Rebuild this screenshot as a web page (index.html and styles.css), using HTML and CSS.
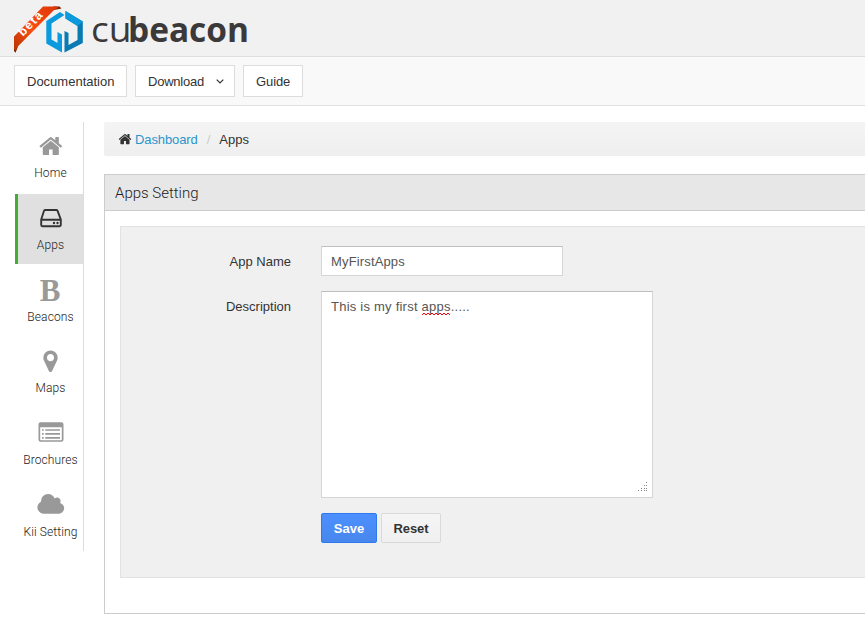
FILE: index.html
```html
<!DOCTYPE html>
<html lang="en">
<head>
<meta charset="utf-8">
<title>Cubeacon</title>
<link rel="stylesheet" href="styles.css">
</head>
<body>
<header class="header">
  <svg class="logo" width="260" height="56" viewBox="0 0 260 56">
    <defs>
      <linearGradient id="ribbon" x1="0" y1="1" x2="1" y2="0"><stop offset="0" stop-color="#b93300"/><stop offset=".45" stop-color="#fa4d14"/><stop offset="1" stop-color="#dd3506"/></linearGradient>
    </defs>
    <path d="M14 46L18 46.500L15.500 52.800L14 51ZM53 6.500H59.500L61.500 8.500L54 10Z" fill="#7d2200"/>
    <path d="M14 49V36.500L43 6.500H57L58 8L54.500 9.500L17.800 46.500L15.500 50.500Z" fill="url(#ribbon)"/>
    <text class="beta" transform="translate(23 36.800) rotate(-46)" textLength="29">beta</text>
    <path d="M46.300 21L60 12L64.500 15L51.500 23.500V39.500L57.500 43V32L62 34.500V52.500L46.300 43.500Z" fill="#0b9ade"/>
    <path d="M65.500 11L82.800 21.500V43L64.500 52.500V31L68.500 33V45L77.500 40V26L65.500 18.500Z" fill="#087bb2"/>
    <path d="M65.500 11L82.800 21.500L77.500 26L65.500 18.500Z" fill="#0b9ade"/>
    <text class="brand-light" x="91" y="42" textLength="40.500" lengthAdjust="spacingAndGlyphs">cu</text>
    <text class="brand-bold" x="128" y="42" textLength="121" lengthAdjust="spacingAndGlyphs">beacon</text>
  </svg>
</header>
<nav class="toolbar">
  <a class="tool docs">Documentation</a>
  <a class="tool download">Download<svg class="caret" width="8" height="5" viewBox="0 0 8 5"><path d="M.7.700L4 4L7.300.700" fill="none" stroke="#333" stroke-width="1.200"/></svg></a>
  <a class="tool guide">Guide</a>
</nav>
<div class="page">
  <aside class="sidebar">
    <a class="item"><svg class="icon" viewBox="0 0 30 24"><path transform="translate(3.200 -.5) scale(.01395)" d="M1408 992v480q0 26-19 45t-45 19h-384v-384h-256v384h-384q-26 0-45-19t-19-45v-480q0-1 .5-3t.5-3l575-474 575 474q1 2 1 6zm223-69l-62 74q-8 9-21 11h-3q-13 0-21-7l-692-577-692 577q-12 8-24 7-13-2-21-11l-62-74q-8-10-7-23.500t11-21.500l719-599q32-26 76-26t76 26l244 204v-195q0-14 9-23t23-9h192q14 0 23 9t9 23v408l219 182q10 8 11 21.500t-7 23.500z"/></svg><span>Home</span></a>
    <a class="item active"><svg class="icon" viewBox="0 0 30 24"><path d="M5.200 13.500L8 4.800Q8.400 4 9.300 4H20.300Q21.200 4 21.600 4.800L24.800 13.500V19Q24.800 20.200 23.600 20.200H6.400Q5.200 20.200 5.200 19ZM5.200 13.700H24.800" fill="none" stroke="#333" stroke-width="1.900"/><circle cx="18" cy="17" r="1.200"/><circle cx="21.500" cy="17" r="1.200"/></svg><span>Apps</span></a>
    <a class="item"><b class="icon letter">B</b><span>Beacons</span></a>
    <a class="item"><svg class="icon" viewBox="0 0 30 24"><path transform="translate(2 -.3) scale(.01395)" d="M1152 640q0-106-75-181t-181-75-181 75-75 181 75 181 181 75 181-75 75-181zm256 0q0 109-33 179l-364 774q-16 33-47.500 52t-67.500 19-67.500-19-46.500-52l-365-774q-33-70-33-179 0-212 150-362t362-150 362 150 150 362z"/></svg><span>Maps</span></a>
    <a class="item"><svg class="icon" viewBox="0 0 30 24"><path fill-rule="evenodd" d="M4.500 1.300H25.500Q27.500 1.300 27.500 3.300V18.800Q27.500 20.800 25.500 20.800H4.500Q2.500 20.800 2.500 18.800V3.300Q2.500 1.300 4.500 1.300ZM4.200 6.200V18.500Q4.200 19.200 4.900 19.200H25.100Q25.800 19.200 25.800 18.500V6.200Z"/><path d="M6 9H7.700M6 12.900H7.700M6 16.800H7.700M9.300 9H24M9.300 12.900H24M9.300 16.800H24" stroke="#999" stroke-width="1.700"/></svg><span>Brochures</span></a>
    <a class="item"><svg class="icon" viewBox="0 0 30 24"><path transform="translate(.5 -.8) scale(.01395)" d="M1984 1152q0 159-112.500 271.500t-271.500 112.500h-1088q-185 0-316.500-131.500t-131.500-316.500q0-132 71-241.500t187-163.500q-2-28-2-43 0-212 150-362t362-150q158 0 286.500 88t187.500 230q70-62 166-62 106 0 181 75t75 181q0 75-41 138 129 30 213 134.500t84 239.500z"/></svg><span>Kii Setting</span></a>
  </aside>
  <main class="content">
    <div class="crumbs"><svg width="13" height="13" viewBox="80 130 1640 1640"><path fill="#333" d="M1408 992v480q0 26-19 45t-45 19h-384v-384h-256v384h-384q-26 0-45-19t-19-45v-480q0-1 .5-3t.5-3l575-474 575 474q1 2 1 6zm223-69l-62 74q-8 9-21 11h-3q-13 0-21-7l-692-577-692 577q-12 8-24 7-13-2-21-11l-62-74q-8-10-7-23.500t11-21.500l719-599q32-26 76-26t76 26l244 204v-195q0-14 9-23t23-9h192q14 0 23 9t9 23v408l219 182q10 8 11 21.500t-7 23.500z"/></svg><a>Dashboard</a><i>/</i><span>Apps</span></div>
    <section class="panel">
      <h2>Apps Setting</h2>
      <form class="form">
        <div class="row"><label>App Name</label><div class="field input">MyFirstApps</div></div>
        <div class="row"><label>Description</label><div class="field area">This is my first <span class="misspelt">apps<svg class="squiggle" width="28" height="4" viewBox="0 0 28 4"><path d="M0 3L2 1L4 3L6 1L8 3L10 1L12 3L14 1L16 3L18 1L20 3L22 1L24 3L26 1L28 3" fill="none" stroke="#f00"/></svg></span>.....<svg class="grip" width="10" height="10" viewBox="0 0 10 10"><path d="M8 .5h1M6 3.500h1M8 3.500h1M3 6.500h1M6 6.500h1M8 6.500h1M0 8.500h1M3 8.500h1M6 8.500h1M8 8.500h1" stroke="#888"/></svg></div></div>
        <div class="actions"><button type="button" class="save">Save</button><button type="button" class="reset">Reset</button></div>
      </form>
    </section>
  </main>
</div>
</body>
</html>
```
FILE: styles.css
```css
* { box-sizing: border-box; }
body { margin: 0; overflow: hidden; background: #fff; color: #333; font: 13px/20px "Liberation Sans", Arial, sans-serif; }
.header { height: 57px; background: #f1f1f1; border-bottom: 1px solid #dedede; }
.logo { display: block; }
.beta { font: bold 12px "Liberation Sans", sans-serif; fill: #fff; }
.brand-light { font: 400 35px "Open Sans", sans-serif; fill: #3b393a; }
.brand-bold { font: 700 34.5px "Open Sans", sans-serif; fill: #3b393a; }
.toolbar { display: flex; gap: 8px; height: 49px; padding: 8px 14px; background: #f9f9f9; border-bottom: 1px solid #e0e0e0; }
.tool { height: 32px; padding: 5px 12px; line-height: 21px; white-space: nowrap; background: #fff; border: 1px solid #ddd; }
.docs { width: 113px; }
.download { width: 100px; letter-spacing: -.22px; }
.guide { width: 60px; letter-spacing: -.1px; }
.caret { margin: 0 -2px 2px 12px; }
.page { display: flex; gap: 20px; padding: 16px 0 0 15px; }
.sidebar { display: flex; flex-direction: column; gap: 1.8px; width: 69px; height: 429px; border-right: 1px solid #ddd; }
.item { display: flex; flex-direction: column; align-items: center; height: 70px; flex: none; padding-top: 12px; border-left: 3px solid transparent; font: 300 12px/20px Roboto, sans-serif; letter-spacing: .1px; white-space: nowrap; color: #222; }
.item.active { background: #e0e0e0; border-color: #43ac35; }
.item span { margin-top: 5px; }
.icon { display: block; width: 30px; height: 24px; flex: none; fill: #999; }
.active .icon { fill: #333; }
.letter { font: bold 31px/25px "Liberation Serif", serif; letter-spacing: 0; text-indent: -1px; text-align: center; color: #999; }
.content { flex: 1; min-width: 0; }
.crumbs { display: flex; align-items: center; height: 34px; padding: 1px 15px 0; background: linear-gradient(#f4f4f4, #efefef); border-radius: 2px 0 0 2px; }
.crumbs a { margin-left: 3px; letter-spacing: -.1px; color: #2a96cc; }
.crumbs i { margin: 0 9px; font-style: normal; color: #ccc; }
.panel { height: 440px; margin-top: 18px; border: 1px solid #ccc; border-right: 0; }
.panel h2 { height: 36px; margin: 0; padding-left: 10px; font: 300 15px/36px Roboto, sans-serif; color: #222; background: #e7e7e7; border-bottom: 1px solid #ccc; }
.form { display: flex; flex-direction: column; gap: 15px; height: 352px; margin: 15px 0 0 15px; padding-top: 19px; background: #f0f0f0; border: 1px solid #e2e2e2; border-right: 0; }
.row { display: flex; gap: 30px; }
.row label { width: 170px; padding-top: 6px; text-align: right; }
.field { padding: 4px 9px; background: #fff; border: 1px solid #d5d5d5; border-top-color: #bfbfbf; color: #555; }
.input { width: 242px; height: 30px; padding-top: 5px; letter-spacing: .15px; }
.area { position: relative; width: 332px; height: 207px; padding-top: 5px; letter-spacing: .23px; }
.misspelt { position: relative; }
.squiggle { position: absolute; left: 0; bottom: -2px; }
.grip { position: absolute; right: 4px; bottom: 5px; }
.actions { display: flex; gap: 4px; margin-left: 200px; }
button { height: 30px; padding: 2px 0 0; font: bold 13px/20px "Liberation Sans", Arial, sans-serif; color: #333; background: linear-gradient(#f5f5f5, #f0f0f0); border: 1px solid #d9d9d9; border-radius: 2px; }
.save { width: 56px; color: #fff; background: linear-gradient(#4d90fe, #4787ed); border-color: #3079ed; }
.reset { width: 60px; letter-spacing: -.1px; }
```
